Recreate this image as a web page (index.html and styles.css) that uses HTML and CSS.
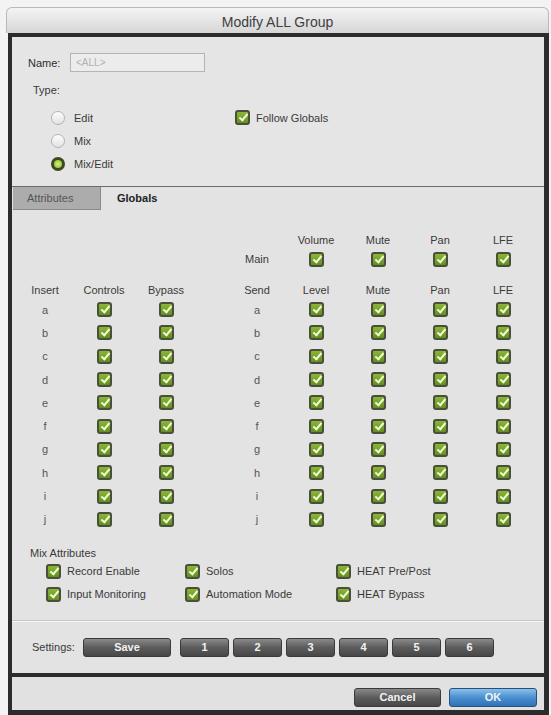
FILE: index.html
```html
<!DOCTYPE html>
<html>
<head>
<meta charset="utf-8">
<title>Modify ALL Group</title>
<link rel="stylesheet" href="styles.css">
</head>
<body>
<div class="window">
  <div class="titlebar">Modify ALL Group</div>
  <div class="frame">
    <div class="top">
      <div class="name-row">
        <span class="lbl">Name:</span>
        <div class="input">&lt;ALL&gt;</div>
      </div>
      <div class="type-lbl">Type:</div>
      <div class="type-row">
        <div class="radios">
          <div class="radio-row"><span class="radio"></span><span>Edit</span></div>
          <div class="radio-row"><span class="radio"></span><span>Mix</span></div>
          <div class="radio-row"><span class="radio on"></span><span>Mix/Edit</span></div>
        </div>
        <div class="follow"><span class="cb"></span><span>Follow Globals</span></div>
      </div>
    </div>

    <div class="tabs">
      <div class="tab inactive">Attributes</div>
      <div class="tab active">Globals</div>
    </div>

    <div class="globals">
      <div class="row head1">
        <span></span><span></span><span></span><span></span>
        <span>Volume</span><span>Mute</span><span>Pan</span><span>LFE</span>
      </div>
      <div class="row main">
        <span></span><span></span><span></span><span>Main</span>
        <span><i class="cb"></i></span><span><i class="cb"></i></span><span><i class="cb"></i></span><span><i class="cb"></i></span>
      </div>
      <div class="row head2">
        <span>Insert</span><span>Controls</span><span>Bypass</span><span>Send</span>
        <span>Level</span><span>Mute</span><span>Pan</span><span>LFE</span>
      </div>
      <div class="row data"><span>a</span><span><i class="cb"></i></span><span><i class="cb"></i></span><span>a</span><span><i class="cb"></i></span><span><i class="cb"></i></span><span><i class="cb"></i></span><span><i class="cb"></i></span></div>
      <div class="row data"><span>b</span><span><i class="cb"></i></span><span><i class="cb"></i></span><span>b</span><span><i class="cb"></i></span><span><i class="cb"></i></span><span><i class="cb"></i></span><span><i class="cb"></i></span></div>
      <div class="row data"><span>c</span><span><i class="cb"></i></span><span><i class="cb"></i></span><span>c</span><span><i class="cb"></i></span><span><i class="cb"></i></span><span><i class="cb"></i></span><span><i class="cb"></i></span></div>
      <div class="row data"><span>d</span><span><i class="cb"></i></span><span><i class="cb"></i></span><span>d</span><span><i class="cb"></i></span><span><i class="cb"></i></span><span><i class="cb"></i></span><span><i class="cb"></i></span></div>
      <div class="row data"><span>e</span><span><i class="cb"></i></span><span><i class="cb"></i></span><span>e</span><span><i class="cb"></i></span><span><i class="cb"></i></span><span><i class="cb"></i></span><span><i class="cb"></i></span></div>
      <div class="row data"><span>f</span><span><i class="cb"></i></span><span><i class="cb"></i></span><span>f</span><span><i class="cb"></i></span><span><i class="cb"></i></span><span><i class="cb"></i></span><span><i class="cb"></i></span></div>
      <div class="row data"><span>g</span><span><i class="cb"></i></span><span><i class="cb"></i></span><span>g</span><span><i class="cb"></i></span><span><i class="cb"></i></span><span><i class="cb"></i></span><span><i class="cb"></i></span></div>
      <div class="row data"><span>h</span><span><i class="cb"></i></span><span><i class="cb"></i></span><span>h</span><span><i class="cb"></i></span><span><i class="cb"></i></span><span><i class="cb"></i></span><span><i class="cb"></i></span></div>
      <div class="row data"><span>i</span><span><i class="cb"></i></span><span><i class="cb"></i></span><span>i</span><span><i class="cb"></i></span><span><i class="cb"></i></span><span><i class="cb"></i></span><span><i class="cb"></i></span></div>
      <div class="row data"><span>j</span><span><i class="cb"></i></span><span><i class="cb"></i></span><span>j</span><span><i class="cb"></i></span><span><i class="cb"></i></span><span><i class="cb"></i></span><span><i class="cb"></i></span></div>

      <div class="mix-lbl">Mix Attributes</div>
      <div class="mix-grid">
        <div class="opt"><span class="cb"></span><span>Record Enable</span></div>
        <div class="opt"><span class="cb"></span><span>Solos</span></div>
        <div class="opt"><span class="cb"></span><span>HEAT Pre/Post</span></div>
        <div class="opt"><span class="cb"></span><span>Input Monitoring</span></div>
        <div class="opt"><span class="cb"></span><span>Automation Mode</span></div>
        <div class="opt"><span class="cb"></span><span>HEAT Bypass</span></div>
      </div>
    </div>

    <div class="settings">
      <span class="set-lbl">Settings:</span>
      <button class="btn save">Save</button>
      <div class="slots">
        <button class="btn slot">1</button>
        <button class="btn slot">2</button>
        <button class="btn slot">3</button>
        <button class="btn slot">4</button>
        <button class="btn slot">5</button>
        <button class="btn slot">6</button>
      </div>
    </div>

    <div class="divider"></div>

    <div class="bottom">
      <button class="btn cancel">Cancel</button>
      <button class="btn ok">OK</button>
    </div>
  </div>
</div>
</body>
</html>
```

FILE: styles.css
```css
* { box-sizing: border-box; }
html, body { margin: 0; padding: 0; }
body {
  width: 551px;
  height: 715px;
  overflow: hidden;
  background: #f3f3f3;
  font-family: "Liberation Sans", Arial, sans-serif;
  font-size: 11px;
  color: #3a3a3a;
}
.window {
  margin: 7px 0 0 8px;
  width: 541px;
}
.titlebar {
  margin-left: -2px;
  width: 543px;
  height: 26px;
  border: 1px solid #b9b9b9;
  border-bottom: none;
  border-radius: 6px 6px 0 0;
  background: linear-gradient(#f4f4f4, #d6d6d6);
  text-align: center;
  font-size: 14px;
  line-height: 28px;
  color: #404040;
}
.frame {
  height: 682px;
  border-style: solid;
  border-color: #2c2c2c;
  border-width: 4px 5px 5px 4px;
  background: #e3e3e3;
  display: flex;
  flex-direction: column;
}
/* top */
.top {
  height: 150px;
  border-bottom: 1px solid #6b6b6b;
  background: #e5e5e5;
  padding-top: 16px;
}
.name-row {
  display: flex;
  align-items: center;
  padding-left: 16px;
  height: 19px;
}
.lbl { width: 42px; color: #2e2e2e; }
.input {
  width: 135px;
  height: 19px;
  border: 1px solid #b4b4b4;
  background: #ececec;
  color: #b0b0b0;
  font-size: 10px;
  line-height: 17px;
  padding-left: 5px;
}
.type-lbl {
  margin-top: 11px;
  padding-left: 21px;
  height: 14px;
  line-height: 14px;
}
.type-row {
  display: flex;
  margin-top: 9px;
  padding-left: 39px;
}
.radios { width: 184px; }
.radio-row {
  display: flex;
  align-items: center;
  gap: 9px;
  height: 23px;
}
.radio {
  width: 14px;
  height: 14px;
  border-radius: 50%;
  border: 1px solid #b3b3b3;
  background: linear-gradient(#fdfdfd, #e2e2e2);
}
.radio.on {
  border: 3px solid #3c4a24;
  background: radial-gradient(circle, #d8f27a 0, #9cc83a 70%);
}
.follow {
  display: flex;
  align-items: center;
  gap: 6px;
  height: 23px;
}
/* checkbox */
.cb {
  display: inline-block;
  position: relative;
  width: 15px;
  height: 15px;
  border-radius: 3px;
  border: 2px solid #4a4f3c;
  background: linear-gradient(#8bb636, #62901f);
  flex: none;
}
.cb::after {
  content: "";
  position: absolute;
  left: 4px;
  top: 0px;
  width: 3px;
  height: 7px;
  border-right: 2px solid #f1fbd6;
  border-bottom: 2px solid #f1fbd6;
  transform: rotate(40deg);
}
/* tabs */
.tabs {
  display: flex;
  height: 23px;
  align-items: stretch;
}
.tab { line-height: 22px; }
.tab.inactive {
  margin-left: 1px;
  width: 88px;
  background: #acacac;
  border-right: 1px solid #8a8a8a;
  border-bottom: 1px solid #8a8a8a;
  padding-left: 14px;
  color: #555;
}
.tab.active {
  padding-left: 16px;
  font-weight: bold;
  color: #222;
}
/* globals */
.globals {
  height: 411px;
  padding-top: 22px;
  border-bottom: 1px solid #c6c6c6;
}
.row {
  display: grid;
  grid-template-columns: 60px 58px 66px 87px 60px 64px 60px 66px;
  margin-left: 3px;
  align-items: center;
  justify-items: center;
}
.row > :nth-child(4) {
  justify-self: end;
  width: 58px;
  text-align: center;
}
.row > span { display: flex; justify-content: center; align-items: center; }
.head1 { height: 16px; }
.main { height: 22px; }
.head2 { height: 17px; margin-top: 11px; }
.data { height: 23.3px; }
.data > :nth-child(1), .data > :nth-child(4) { color: #555; }
.mix-lbl {
  margin-top: 15px;
  padding-left: 18px;
  height: 14px;
  line-height: 14px;
}
.mix-grid {
  display: grid;
  grid-template-columns: 139px 151px 150px;
  grid-auto-rows: 23px;
  padding-left: 34px;
}
.opt {
  display: flex;
  align-items: center;
  gap: 6px;
}
/* settings */
.settings {
  height: 52px;
  border-top: 1px solid #f6f6f6;
  display: flex;
  align-items: flex-start;
  padding: 16px 0 0 20px;
}
.set-lbl { line-height: 19px; width: 51px; }
.btn {
  height: 19px;
  border: 1px solid #3a3a3a;
  border-radius: 3px;
  background: linear-gradient(#8a8a8a, #5c5c5c 50%, #474747);
  color: #f2f2f2;
  font-family: "Liberation Sans", Arial, sans-serif;
  font-size: 11px;
  font-weight: bold;
  padding: 0;
  line-height: 17px;
}
.save { width: 88px; }
.slots {
  display: flex;
  gap: 4px;
  margin-left: 9px;
}
.slot { width: 49px; }
.divider { height: 4px; background: #2c2c2c; }
.bottom {
  flex: 1;
  display: flex;
  justify-content: flex-end;
  align-items: flex-start;
  gap: 8px;
  padding: 11px 7px 0 0;
  background: #e1e1e1;
}
.cancel { width: 87px; }
.ok {
  width: 88px;
  border-color: #24527e;
  background: linear-gradient(#8cc0ea, #4a8fd0 50%, #2f72b6);
}
```
